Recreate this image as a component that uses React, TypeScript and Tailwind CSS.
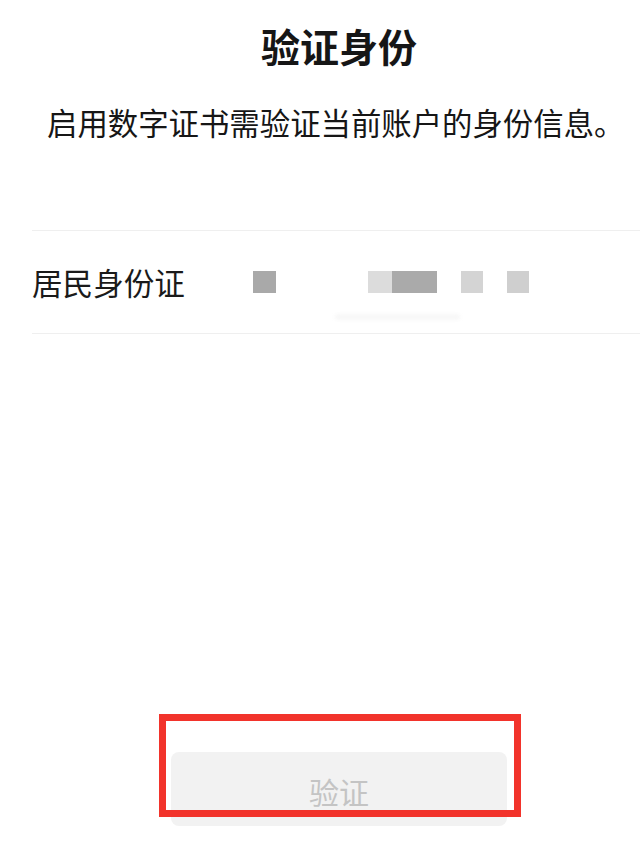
import React from "react";

export default function App() {
  const font = { fontFamily: '"Noto Sans CJK SC", "Noto Sans", sans-serif' };
  return (
    <div
      className="relative w-[640px] h-[852px] bg-white overflow-hidden flex flex-col"
      style={font}
    >
      <h1 className="mt-[26px] pl-[38px] text-center text-[39px] leading-[38px] font-semibold text-[#161616]">
        验证身份
      </h1>
      <p className="mt-[43px] pl-[47px] text-[30.4px] leading-[30px] text-[#161616] whitespace-nowrap">
        启用数字证书需验证当前账户的身份信息。
      </p>

      <div className="mt-[93px] ml-[32px] h-[104px] border-y border-[#efefef] flex items-center">
        <span className="text-[30.6px] leading-[30px] text-[#1a1a1a] whitespace-nowrap">
          居民身份证
        </span>
        <div className="relative ml-[68px] flex items-center h-[22px]">
          <div className="w-[23px] h-[22px] bg-[#a9a9a9]" />
          <div className="ml-[92px] w-[24px] h-[22px] bg-[#dcdcdc]" />
          <div className="w-[45px] h-[22px] bg-[#aaaaaa]" />
          <div className="ml-[24px] w-[22px] h-[22px] bg-[#d4d4d4]" />
          <div className="ml-[24px] w-[22px] h-[22px] bg-[#cfcfcf]" />
          <div className="absolute left-[82px] top-[44px] w-[125px] h-[4px] rounded-full bg-[#f3f3f3] blur-[2px]" />
        </div>
      </div>

      <button className="mt-[418px] ml-[171px] w-[336px] h-[74px] rounded-[8px] bg-[#f2f2f2] text-[30px] leading-[30px] text-[#c4c4c4] flex items-center justify-center pt-[4px]">
        验证
      </button>

      <div className="absolute left-[159px] top-[714px] w-[362px] h-[103px] border-[7px] border-[#f2332b]" />
    </div>
  );
}
